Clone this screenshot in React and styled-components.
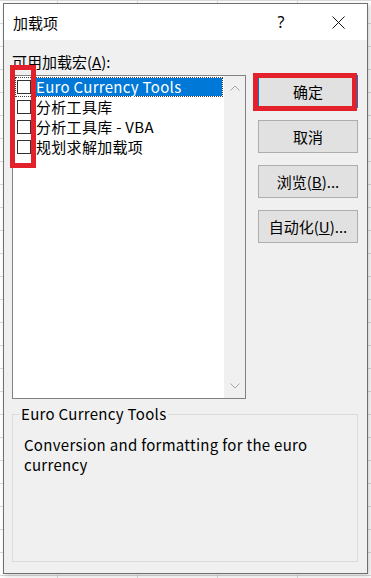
import styled, { createGlobalStyle } from "styled-components";

const items = [
  { label: "Euro Currency Tools", selected: true },
  { label: "分析工具库" },
  { label: "分析工具库 - VBA" },
  { label: "规划求解加载项" },
];

const GlobalStyle = createGlobalStyle`
  html, body {
    margin: 0;
    padding: 0;
  }
  body {
    width: 371px;
    height: 578px;
    overflow: hidden;
    background-color: #fff;
    background-image:
      linear-gradient(to bottom, #dadada 1px, transparent 1px),
      linear-gradient(to right, #dadada 1px, transparent 1px);
    background-size: 100% 23px, 80px 100%;
    background-position: 0 0, 57px 0;
    font-family: "Noto Sans CJK SC", "Noto Sans", sans-serif;
    color: #000;
  }
`;

const Dialog = styled.div`
  position: relative;
  margin: 3px 0 0 3px;
  width: 365px;
  height: 571px;
  box-sizing: border-box;
  border: 1px solid #6f6f6f;
  display: flex;
  flex-direction: column;
  box-shadow: 2px 2px 5px rgba(0, 0, 0, 0.18);
`;

const TitleBar = styled.div`
  height: 36px;
  background: #fff;
  display: flex;
  align-items: center;
  padding-left: 9px;
  font-size: 15px;
`;

const Title = styled.div`
  flex: 1;
`;

const TitleButton = styled.div`
  width: ${({ w }) => w}px;
  height: 36px;
  display: flex;
  align-items: center;
  justify-content: center;
  font-family: "Noto Sans", sans-serif;
  font-size: 16px;
  margin-right: ${({ mr }) => mr || 0}px;
`;

const Body = styled.div`
  flex: 1;
  background: #f0f0f0;
  padding: 12px 9px 11px 8px;
  display: flex;
  flex-direction: column;
  font-size: 15px;
`;

const MainRow = styled.div`
  display: flex;
`;

const LeftColumn = styled.div`
  width: 234px;
  display: flex;
  flex-direction: column;
`;

const FieldLabel = styled.div`
  line-height: 20px;
  margin-bottom: 3px;
`;

const ListBox = styled.div`
  height: 324px;
  box-sizing: border-box;
  border: 1px solid #828282;
  background: #fff;
  display: flex;
`;

const List = styled.div`
  flex: 1;
  padding: 1px 1px 0 2px;
`;

const Row = styled.div`
  height: 20px;
  box-sizing: border-box;
  border: 1px dotted ${({ focused }) => (focused ? "#444" : "transparent")};
  display: flex;
  align-items: center;
`;

const Check = styled.span`
  width: 14px;
  height: 14px;
  box-sizing: border-box;
  border: 1px solid #333;
  background: #fff;
  margin-left: 1px;
  flex-shrink: 0;
`;

const ItemText = styled.span`
  flex: 1;
  height: 18px;
  line-height: 18px;
  margin-left: 3px;
  padding-left: 2px;
  white-space: nowrap;
  letter-spacing: 0.3px;
  background: ${({ selected }) => (selected ? "#0078d7" : "transparent")};
  color: ${({ selected }) => (selected ? "#fff" : "#000")};
`;

const ScrollBar = styled.div`
  width: 21px;
  background: #f0f0f0;
  display: flex;
  flex-direction: column;
  justify-content: space-between;
  align-items: center;
  padding: 9px 0 9px;
`;

const ButtonColumn = styled.div`
  margin-left: 12px;
  padding-top: 23px;
  display: flex;
  flex-direction: column;
  gap: 12px;
`;

const Button = styled.div`
  width: 100px;
  height: 33px;
  box-sizing: border-box;
  border: 1px solid ${({ primary }) => (primary ? "#0078d7" : "#adadad")};
  background: #e1e1e1;
  display: flex;
  align-items: center;
  justify-content: center;
`;

const GroupBox = styled.fieldset`
  flex: 1;
  margin: 5px 0 0 0;
  padding: 11px 11px 0 11px;
  border: 1px solid #dcdcdc;
  min-width: 0;
  letter-spacing: 0.3px;
`;

const Legend = styled.legend`
  margin-left: -4px;
  padding: 0 2px 0 1px;
  line-height: 20px;
`;

const Description = styled.div`
  line-height: 20px;
`;

const Highlight = styled.div`
  position: absolute;
  left: ${({ x }) => x}px;
  top: ${({ y }) => y}px;
  width: ${({ w }) => w}px;
  height: ${({ h }) => h}px;
  box-sizing: border-box;
  border: 5px solid #e3212b;
  pointer-events: none;
`;

const Chevron = ({ up }) => (
  <svg width="10" height="6" viewBox="0 0 10 6">
    <polyline
      points={up ? "0.5,5.5 5,1 9.5,5.5" : "0.5,0.5 5,5 9.5,0.5"}
      fill="none"
      stroke="#a6a6a6"
      strokeWidth="1"
    />
  </svg>
);

const App = () => {
  return (
    <>
      <GlobalStyle />
      <Dialog>
        <TitleBar>
          <Title>加载项</Title>
          <TitleButton w={46} mr={5}>?</TitleButton>
          <TitleButton w={58}>
            <svg width="13" height="13" viewBox="0 0 13 13">
              <path d="M0.5 0.5 L12.5 12.5 M12.5 0.5 L0.5 12.5" stroke="#111" strokeWidth="1" />
            </svg>
          </TitleButton>
        </TitleBar>
        <Body>
          <MainRow>
            <LeftColumn>
              <FieldLabel>
                可用加载宏(<u>A</u>):
              </FieldLabel>
              <ListBox>
                <List>
                  {items.map((item, idx) => (
                    <Row key={idx} focused={item.selected}>
                      <Check />
                      <ItemText selected={item.selected}>{item.label}</ItemText>
                    </Row>
                  ))}
                </List>
                <ScrollBar>
                  <Chevron up />
                  <Chevron />
                </ScrollBar>
              </ListBox>
            </LeftColumn>
            <ButtonColumn>
              <Button primary>确定</Button>
              <Button>取消</Button>
              <Button>
                浏览(<u>B</u>)...
              </Button>
              <Button>
                自动化(<u>U</u>)...
              </Button>
            </ButtonColumn>
          </MainRow>
          <GroupBox>
            <Legend>Euro Currency Tools</Legend>
            <Description>Conversion and formatting for the euro currency</Description>
          </GroupBox>
        </Body>
        <Highlight x={6} y={61} w={26} h={103} />
        <Highlight x={249} y={69} w={104} h={38} />
      </Dialog>
    </>
  );
};

export default App;
